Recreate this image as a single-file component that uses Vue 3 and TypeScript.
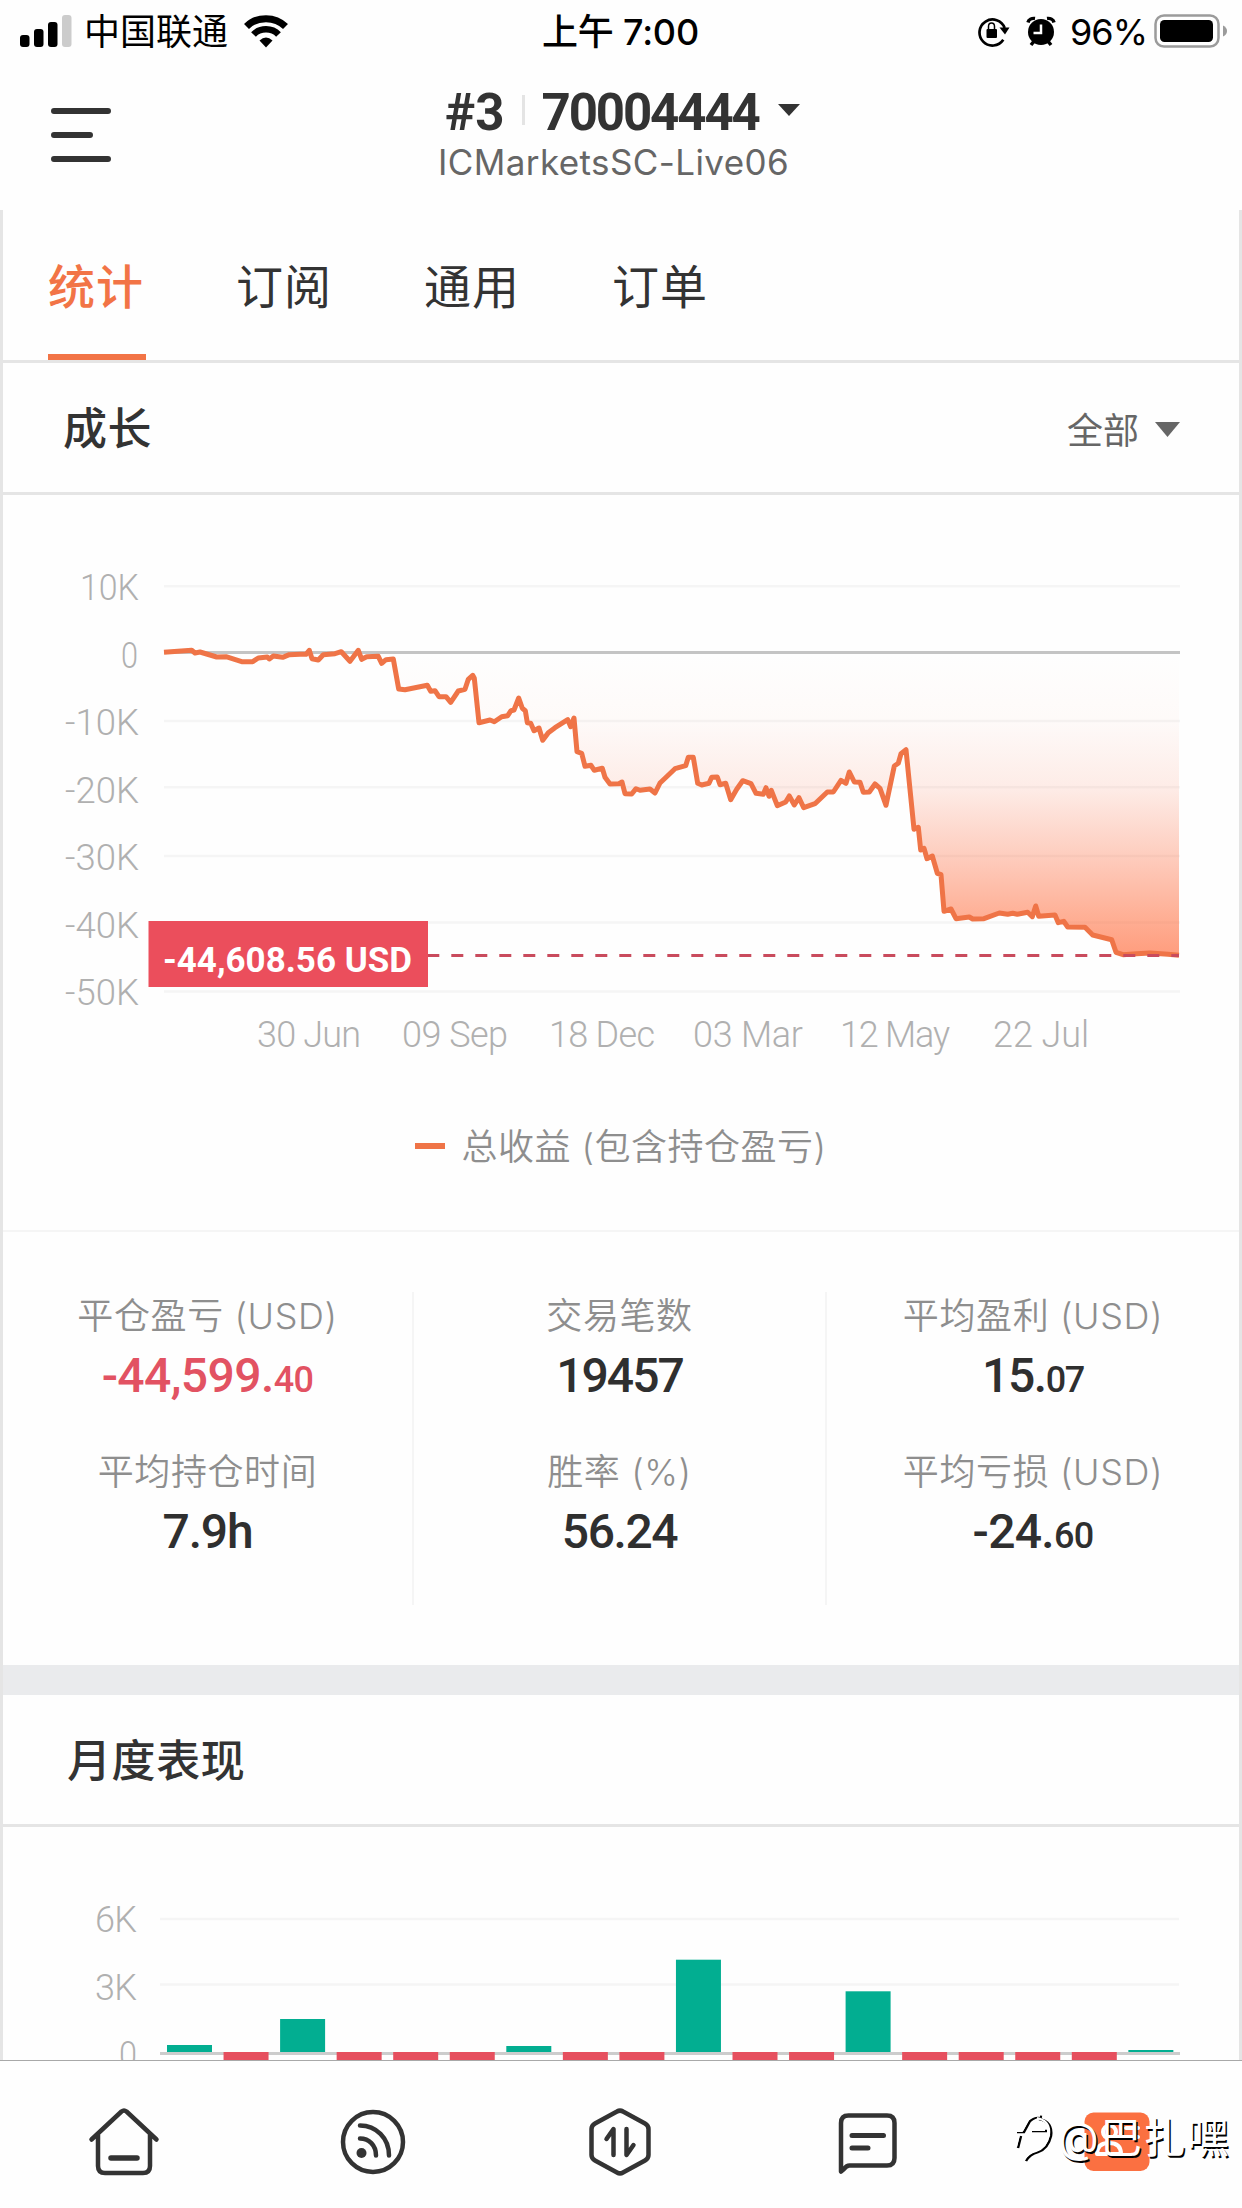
<script setup lang="ts">
interface Stat { label: string; main: string; minor?: string; loss?: boolean; tracking: number }
interface AxisLabel { text: string; x: number; y: number; width: number }

const tabs: string[] = ['统计', '订阅', '通用', '订单']

const stats: Stat[][] = [
  [
    { label: '平仓盈亏 (USD)', main: '-44,599.', minor: '40', loss: true, tracking: -0.6 },
    { label: '平均持仓时间', main: '7.9h', tracking: -1.2 },
  ],
  [
    { label: '交易笔数', main: '19457', tracking: -2 },
    { label: '胜率 (%)', main: '56.24', tracking: -1.4 },
  ],
  [
    { label: '平均盈利 (USD)', main: '15.', minor: '07', tracking: -1.4 },
    { label: '平均亏损 (USD)', main: '-24.', minor: '60', tracking: -0.7 },
  ],
]

// The growth plot spans y 495..1080 of the screen; its viewBox keeps those units.
const growthGrid = [586.3, 721, 787.3, 856, 922.6, 991.6]
const growthY: AxisLabel[] = [
  { text: '10K', x: 80, y: 600, width: 59 },
  { text: '0', x: 121, y: 668, width: 17 },
  { text: '-10K', x: 65, y: 735, width: 74 },
  { text: '-20K', x: 65, y: 802.5, width: 74 },
  { text: '-30K', x: 65, y: 870, width: 74 },
  { text: '-40K', x: 65, y: 937.5, width: 74 },
  { text: '-50K', x: 65, y: 1004.5, width: 74 },
]
const growthX: AxisLabel[] = [
  { text: '30 Jun', x: 257, y: 1047, width: 104 },
  { text: '09 Sep', x: 402, y: 1047, width: 106 },
  { text: '18 Dec', x: 549, y: 1047, width: 106 },
  { text: '03 Mar', x: 693, y: 1047, width: 110 },
  { text: '12 May', x: 840, y: 1047, width: 110 },
  { text: '22 Jul', x: 993, y: 1047, width: 96 },
]
const growth =
  '164,652.3 191.7,650.3 195,653 200,652 216.7,657 226,656.7 241.7,661.7 252.7,661.7 258.3,658 267.3,657 269.3,659 273.3,656 282.7,657.3 289.3,654.7 300,654.3 306,654.3 309.3,650.3 312,658.7 318.3,660 323.3,654.7 335,653.7 341.3,651.7 350,661.3 358.3,650.3 361.7,659.3 366.7,656.7 378.3,656.3 381.7,663.3 386,659.7 393.3,659 398.7,689 405,689.7 427.3,685.3 430.7,691.3 435,690.7 439,696.7 446,696.7 450.7,702.3 458.3,691 465,689.3 468.3,679.3 472.7,675.3 474.3,678.3 479,722.7 490,720 494.3,721.7 501.7,716.7 507.7,715.7 511,710.7 514,710 518.7,698 522.3,708.3 525.3,710.7 527.3,722.7 530.7,723.3 534,730.7 539,728 542.7,740.3 548.3,732.7 555,727.7 567.7,719.7 570.7,726.7 574,718 577,751.7 581.7,753.3 585,766.3 591,765.3 594.3,770.3 602.3,768.3 605,777.3 610,784 619,783.7 622,782 625,793.7 631.7,794 636,788.7 640,790.3 650,789 655,793 660,783 675,768.7 685.7,765.7 688.3,757.3 693.3,757.3 697.7,783.3 701.7,785 709,783.3 711.7,777.3 717.3,777 720,784.7 725.7,783.3 730.7,799.7 736.7,789.3 742.7,780.7 751,783.7 756,793.3 763.3,794.3 766,787.7 769,796.3 771.3,790.3 777.3,805.7 785.7,802 789.3,796 794.3,805 799,797.7 803.7,807.7 815,803.7 827.3,792 833.3,792 841,780.3 846,783.3 849.3,772 854.3,782 860,782.3 863.3,792.3 869.3,792 875,784 880,788.3 886,805.3 894.3,766 898.3,763.3 901,753.7 906,749.7 914,829.3 918.3,827.3 920.7,850 924,848.3 927,858.7 932.3,856 937.3,873.3 941,874.7 944,911.3 951,909 956,918.7 969.3,917 972.7,919 984,918.7 999.3,913 1007.7,914.3 1012.7,913.3 1017.3,914.3 1027.7,912.3 1032.3,916.7 1035.7,906 1038.7,916.3 1055,915 1058.3,922.7 1063.7,921.3 1067.7,927 1085,927.3 1092.7,935 1111.7,939.7 1116,952.3 1123,954.7 1136.7,953.7 1150,953 1168,954.3 1179,955.3'

// Height above the zero line in pixels; -1 marks a losing month that runs below the fold.
const months = [7, -1, 33, -1, -1, -1, 6, -1, -1, 92.3, -1, -1, 60.7, -1, -1, -1, -1, 2]
const bars = months.map((h, i) => ({
  x: 167 + i * 56.55,
  y: h > 0 ? 2052 - h : 2052,
  height: h > 0 ? h : 12,
  gain: h > 0,
}))
</script>

<template>
  <div class="screen">
    <div class="status">
      <svg class="signal" width="52" height="34" viewBox="0 0 52 34">
        <rect x="0" y="21" width="9.5" height="12" rx="3" />
        <rect x="14" y="15" width="9.5" height="18" rx="3" />
        <rect x="28" y="8" width="9.5" height="25" rx="3" />
        <rect x="42" y="1" width="9.5" height="32" rx="3" fill="#ccc" />
      </svg>
      <span class="carrier">中国联通</span>
      <svg class="wifi" width="46" height="34" viewBox="0 0 46 34">
        <path d="M3.5 12.5C14 2 32 2 42.500 12.500" fill="none" stroke="#000" stroke-width="7" />
        <path d="M10.500 20.500C17 13.500 29 13.500 35.500 20.500" fill="none" stroke="#000" stroke-width="6.500" />
        <path d="M16.500 26.500Q23 20.500 29.500 26.500L23 33.500Z" />
      </svg>
      <span class="time">上午 7:00</span>
      <div class="status-right">
        <svg width="34" height="32" viewBox="0 0 34 32">
          <path d="M26.300 24.800A13 13 0 1 1 27.700 13" fill="none" stroke="#000" stroke-width="2.700" />
          <path d="M22.500 12.500H32.500L28 19.500Z" />
          <rect x="9.500" y="14" width="10.500" height="9" rx="1" />
          <path d="M11.500 14V11.500a3 3.500 0 0 1 6 0V14" fill="none" stroke="#000" stroke-width="1.500" />
        </svg>
        <svg class="alarm" width="30" height="32" viewBox="0 0 30 32">
          <circle cx="15" cy="17" r="13" />
          <path d="M2 7.500A6 5 0 0 1 9 3.500M28 7.500A6 5 0 0 0 21 3.500M5 30l4-5M25 30l-4-5" fill="none" stroke="#000" stroke-width="3.500" />
          <path d="M15 9.500V18H7.500" fill="none" stroke="#fff" stroke-width="2.500" />
        </svg>
        <span class="percent">96%</span>
        <svg width="74" height="36" viewBox="0 0 74 36">
          <rect x="1.500" y="2.500" width="63" height="31" rx="8.500" fill="none" stroke="#9b9b9b" stroke-width="2.500" />
          <rect x="6" y="7" width="53" height="22" rx="4.500" />
          <path d="M69 12.500q4 2 4 5.500t-4 5.500z" fill="#9b9b9b" />
        </svg>
      </div>
    </div>

    <header class="header">
      <svg class="menu" width="60" height="54" viewBox="0 0 60 54" stroke="#333" stroke-width="6" stroke-linecap="round">
        <path d="M3 3H57M3 27H39M3 51H57" />
      </svg>
      <div class="account">
        <div class="account-row">
          <span>#3</span>
          <i class="sep"></i>
          <span class="number">70004444</span>
          <svg width="22" height="12" viewBox="0 0 22 12"><path d="M0 0H22L11 12Z" fill="#333" /></svg>
        </div>
        <div class="server">ICMarketsSC-Live06</div>
      </div>
    </header>

    <main class="content">
      <nav class="tabs">
        <div v-for="(t, i) in tabs" :key="t" class="tab" :class="{ active: i === 0 }">{{ t }}</div>
      </nav>

      <div class="section-head first">
        <h2>成长</h2>
        <div class="filter">
          <span>全部</span>
          <svg width="25" height="15" viewBox="0 0 25 15"><path d="M0 0H25L12.500 15Z" fill="#666" /></svg>
        </div>
      </div>

      <svg class="growth" width="1236" height="585" viewBox="3 495 1236 585">
        <defs>
          <linearGradient id="loss" gradientUnits="userSpaceOnUse" x1="0" y1="652" x2="0" y2="956">
            <stop offset="0" stop-color="#ff7040" stop-opacity="0" />
            <stop offset="0.230" stop-color="#f77048" stop-opacity="0.030" />
            <stop offset="0.450" stop-color="#fb7048" stop-opacity="0.130" />
            <stop offset="0.670" stop-color="#fd6e42" stop-opacity="0.340" />
            <stop offset="0.870" stop-color="#ff6c3c" stop-opacity="0.540" />
            <stop offset="1" stop-color="#ff6a3a" stop-opacity="0.660" />
          </linearGradient>
        </defs>
        <g stroke="#f5f5f5" stroke-width="2.500">
          <line v-for="y in growthGrid" :key="y" x1="164" x2="1180" :y1="y" :y2="y" />
        </g>
        <line x1="164" x2="1180" y1="652.500" y2="652.500" stroke="#c4c4c4" stroke-width="3" />
        <polygon :points="`164,652.3 ${growth} 1179,652.3`" fill="url(#loss)" />
        <polyline :points="growth" fill="none" stroke="#ef7447" stroke-width="5" stroke-linejoin="round" />
        <line x1="427.300" x2="1179" y1="955.500" y2="955.500" stroke="#c94b5d" stroke-width="3" stroke-dasharray="12 12" />
        <g class="axis">
          <text v-for="l in growthY" :key="l.text" :x="l.x" :y="l.y" :textLength="l.width" lengthAdjust="spacingAndGlyphs">{{ l.text }}</text>
          <text v-for="l in growthX" :key="l.text" :x="l.x" :y="l.y" :textLength="l.width">{{ l.text }}</text>
        </g>
        <rect x="148.500" y="921" width="279.500" height="66" fill="#eb4e5c" />
        <text class="badge" x="163" y="972" textLength="249" lengthAdjust="spacingAndGlyphs">-44,608.56 USD</text>
      </svg>

      <div class="legend"><i></i><span>总收益 (包含持仓盈亏)</span></div>

      <div class="stats">
        <div v-for="(col, i) in stats" :key="i" class="stat-col">
          <div v-for="s in col" :key="s.label" class="stat">
            <div class="stat-label">{{ s.label }}</div>
            <div class="stat-value" :class="{ loss: s.loss }" :style="{ letterSpacing: s.tracking + 'px' }">{{ s.main }}<small v-if="s.minor">{{ s.minor }}</small></div>
          </div>
        </div>
      </div>

      <div class="band"></div>

      <div class="section-head second"><h2>月度表现</h2></div>

      <svg class="monthly" width="1236" height="233" viewBox="3 1827 1236 233">
        <g stroke="#f5f5f5" stroke-width="2.500">
          <line x1="160" x2="1179" y1="1919" y2="1919" />
          <line x1="160" x2="1179" y1="1984.500" y2="1984.500" />
        </g>
        <line x1="160" x2="1180" y1="2053.500" y2="2053.500" stroke="#ccc" stroke-width="3" />
        <rect v-for="b in bars" :key="b.x" :x="b.x" :y="b.y" width="45" :height="b.height" :fill="b.gain ? '#02ae91' : '#e64f5e'" />
        <g class="axis">
          <text x="95" y="1932" textLength="42">6K</text>
          <text x="95" y="1999.500" textLength="42">3K</text>
          <text x="119" y="2067" textLength="18" lengthAdjust="spacingAndGlyphs">0</text>
        </g>
      </svg>
    </main>

    <nav class="tabbar">
      <svg viewBox="0 0 72 72">
        <path d="M3.500 33.500L33.500 5.500Q36 3.500 38.500 5.500L68.500 33.500M10 28.500V60Q10 67 17 67H55Q62 67 62 60V28.500" />
        <path d="M23 52H49" stroke-width="5.500" />
      </svg>
      <svg viewBox="0 0 72 72">
        <circle cx="37" cy="36" r="30" />
        <path d="M24 19.500C40 19.500 53 32 53 49.500M24 32.500C33 32.500 40 39 40 49.500" />
        <circle cx="25.500" cy="47" r="5" fill="#333" stroke="none" />
      </svg>
      <svg viewBox="0 0 72 72">
        <path d="M33 5.500Q36 3.700 39 5.500L61 17.500Q64.500 19.500 64.500 23V49Q64.500 52.500 61 54.500L39 66.500Q36 68.300 33 66.500L11 54.500Q7.500 52.500 7.500 49V23Q7.500 19.500 11 17.500Z" />
        <path d="M22.500 33L29.500 23V49M49.500 39L42.500 49V23" stroke-width="4.500" />
      </svg>
      <svg viewBox="0 0 72 72">
        <path d="M9 65.500V17Q9 9.500 16.500 9.500H55Q62.500 9.500 62.500 17V52Q62.500 59.500 55 59.500H17.500Q14.500 59.500 12 63L9 65.500Z" />
        <path d="M20 29.500H51.500M20 42H36" stroke-width="5" />
      </svg>
      <svg viewBox="0 0 72 72">
        <rect x="4.500" y="6.500" width="65" height="58.500" rx="9" fill="#fb7041" stroke="none" />
        <g stroke="#fff" stroke-width="4">
          <circle cx="29.500" cy="26" r="6.500" />
          <path d="M17 48Q17 37 29 37T41 48ZM46 22H58M48 31H58" />
        </g>
      </svg>
      <div class="watermark">
        <svg width="42" height="50" viewBox="0 0 42 50">
          <g stroke="#000" stroke-width="2.500">
            <path d="M3 19H10L16 8Q22 3 28 4M18 18H33M7 23L4 35M25 6Q39 9 37 23Q34 36 24 39Q16 41 12 48" />
          </g>
          <g stroke="#fff" stroke-width="2" transform="translate(-2 -1)">
            <path d="M3 19H10L16 8Q22 3 28 4M18 18H33M7 23L4 35M25 6Q39 9 37 23Q34 36 24 39Q16 41 12 48" />
          </g>
        </svg>
        <span>@巴扎嘿</span>
      </div>
    </nav>
  </div>
</template>

<style>
body {
  background: #fff;
}
</style>

<style scoped>
.screen {
  width: 1242px;
  height: 2208px;
  overflow: hidden;
  display: flex;
  flex-direction: column;
  background: #fefefe;
  color: #333;
  font-family: Inter, "Noto Sans CJK SC", sans-serif;
}
svg {
  display: block;
  flex: none;
}
.status {
  height: 60px;
  flex: none;
  display: grid;
  grid-template-columns: 52px 157px 46px 1fr auto;
  align-items: center;
  padding: 0 14px 0 20px;
  color: #000;
  font-size: 36px;
  line-height: 60px;
}
.carrier {
  padding: 2px 0 0 12px;
}
.wifi {
  margin-left: 14px;
}
.time {
  justify-self: start;
  margin-left: 267px;
  padding-top: 2px;
  font-weight: 500;
  letter-spacing: -0.2px;
  white-space: nowrap;
}
.status-right {
  display: flex;
  align-items: center;
}
.alarm {
  margin-left: 15px;
}
.percent {
  margin: 2px 7px 0 14px;
  letter-spacing: -1px;
}
.header {
  height: 150px;
  flex: none;
  display: grid;
  grid-template-columns: 387px 1fr;
  padding-left: 51px;
}
.menu {
  margin-top: 48px;
}
.account {
  padding-top: 27px;
}
.account-row {
  display: flex;
  align-items: center;
  height: 52px;
  padding-left: 7px;
  font: 700 51px/52px Roboto, sans-serif;
}
.sep {
  width: 3px;
  height: 30px;
  margin: 0 16px 6px 18px;
  background: #e4e4e4;
}
.number {
  letter-spacing: -2.1px;
  margin-right: 19px;
}
.account-row svg {
  margin-bottom: 7px;
}
.server {
  height: 50px;
  line-height: 47px;
  font-size: 35px;
  color: #666;
  letter-spacing: 0.4px;
}
.content {
  height: 1850px;
  flex: none;
  overflow: hidden;
  border: solid #e5e5e5;
  border-width: 0 3px;
  box-sizing: border-box;
}
.tabs {
  display: flex;
  gap: 90px;
  height: 150px;
  padding-left: 45px;
  border-bottom: 3px solid #e5e5e5;
}
.tab {
  width: 98px;
  height: 150px;
  box-sizing: border-box;
  font-size: 47px;
  line-height: 153px;
  letter-spacing: 1px;
  white-space: nowrap;
}
.tab.active {
  color: #f27446;
  font-weight: 500;
  border-bottom: 6px solid #f27446;
}
.section-head {
  display: flex;
  align-items: center;
  justify-content: space-between;
  height: 129px;
  border-bottom: 3px solid #e5e5e5;
}
.first {
  padding: 0 59px 0 60px;
}
.second {
  padding-left: 64px;
}
h2 {
  margin: 0;
  padding-bottom: 4px;
  font-size: 44px;
  font-weight: 500;
  letter-spacing: 0.6px;
}
.filter {
  display: flex;
  align-items: center;
  gap: 16px;
  font-size: 36px;
  color: #666;
}
.filter svg {
  margin-top: 4px;
}
.axis text {
  font-family: Roboto, sans-serif;
  font-weight: 300;
  font-size: 36px;
  fill: #b0b0b0;
}
.badge {
  font: 700 35px Roboto, sans-serif;
  fill: #fff;
}
.legend {
  display: flex;
  justify-content: center;
  align-items: center;
  gap: 16px;
  height: 132px;
  padding-bottom: 18px;
  font-size: 36px;
  font-weight: 350;
  letter-spacing: 0.5px;
  color: #8e8e8e;
}
.legend span {
  margin-top: -4px;
}
.legend i {
  width: 30px;
  height: 6px;
  background: #ef7447;
}
.stats {
  display: grid;
  grid-template-columns: 409px 413px 414px;
  padding: 60px 0;
  height: 313px;
  border-top: 2px solid #f5f5f5;
}
.stat-col {
  text-align: center;
}
.stat-col + .stat-col {
  border-left: 2px solid #f5f5f5;
}
.stat {
  height: 156px;
}
.stat-label {
  height: 50px;
  line-height: 49px;
  font-size: 36px;
  font-weight: 350;
  letter-spacing: 0.6px;
  color: #8e8e8e;
}
.stat-value {
  height: 60px;
  margin-top: 4px;
  font: 500 48px/60px Roboto, sans-serif;
  color: #2f2f2f;
}
.stat-value small {
  font-size: 36px;
}
.stat-value.loss {
  color: #e25262;
}
.band {
  height: 30px;
  background: #eaebed;
}
.tabbar {
  flex: 1;
  display: flex;
  position: relative;
  box-sizing: border-box;
  border-top: 1px solid #a8a8a8;
  padding: 45px 0 0 88px;
  gap: 176px;
}
.tabbar > svg {
  width: 72px;
  height: 72px;
  fill: none;
  stroke: #333;
  stroke-width: 4.5;
  stroke-linecap: round;
  stroke-linejoin: round;
}
.watermark {
  position: absolute;
  left: 1014px;
  top: 45px;
  display: flex;
  align-items: center;
  height: 64px;
  gap: 2px;
  color: #fff;
  font-size: 42px;
  letter-spacing: 1.5px;
  line-height: 64px;
  text-shadow: 1.5px 1.5px 0 #000;
  white-space: nowrap;
}
.watermark svg {
  fill: none;
}
</style>
